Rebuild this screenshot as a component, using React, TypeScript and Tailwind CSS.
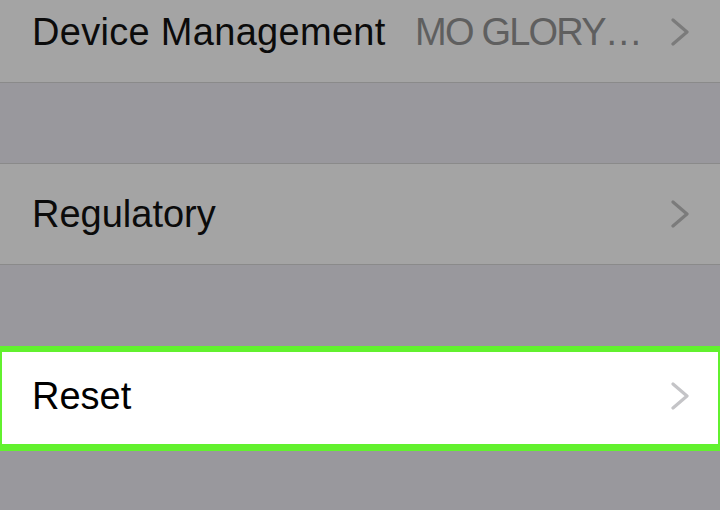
import React from "react";

function Chevron({ color }: { color: string }) {
  return (
    <svg width="18" height="28" viewBox="0 0 18 28" fill="none" className="shrink-0">
      <polyline
        points="2,2 16,14 2,26"
        stroke={color}
        strokeWidth="3.2"
        strokeLinecap="round"
        strokeLinejoin="round"
        fill="none"
      />
    </svg>
  );
}

export default function App() {
  return (
    <div
      className="w-[720px] h-[510px] overflow-hidden bg-[#99989d] text-[38px]"
      style={{ fontFamily: '"Liberation Sans", Arial, sans-serif' }}
    >
      <div className="-mt-[18px] h-[101px] bg-[#a4a4a4] border-b border-[#8a8a8a] flex items-center pl-[32px] pr-[31px]">
        <span className="text-[#0b0b0b] tracking-[0.3px]">Device Management</span>
        <span className="ml-auto text-[#5f5f5f] tracking-[-1.8px] mr-[30px]">MO GLORY…</span>
        <Chevron color="#7b7b7b" />
      </div>
      <div className="h-[80px]" />
      <div className="h-[102px] bg-[#a4a4a4] border-y border-[#8a8a8a] flex items-center pl-[32px] pr-[31px]">
        <span className="text-[#0b0b0b]">Regulatory</span>
        <span className="ml-auto" />
        <Chevron color="#7b7b7b" />
      </div>
      <div className="h-[81px]" />
      <div className="h-[105px] bg-white border-t-[6px] border-b-[7px] border-x-2 border-[#62f12e] flex items-center pl-[30px] pr-[29px] pb-[4px]">
        <span className="text-black">Reset</span>
        <span className="ml-auto" />
        <Chevron color="#c4c4c7" />
      </div>
    </div>
  );
}
